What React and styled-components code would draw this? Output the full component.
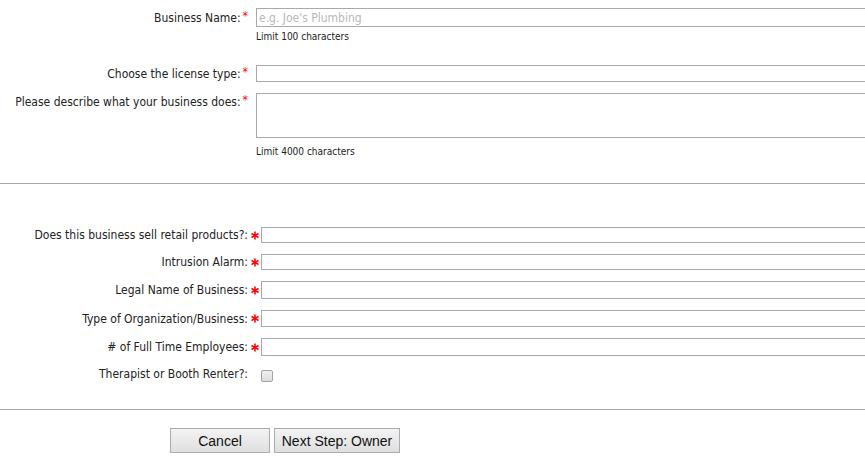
import React from "react";
import styled, { createGlobalStyle } from "styled-components";

const Global = createGlobalStyle`
  html, body { margin: 0; padding: 0; background: #fff; overflow: hidden; }
  body { font-family: "DejaVu Sans Condensed", "DejaVu Sans", Tahoma, sans-serif; font-stretch: semi-condensed; font-size: 12px; color: #222; }
`;

const Page = styled.div`
  width: 865px;
  display: flex;
  flex-direction: column;
`;

const TopSection = styled.div`
  display: grid;
  grid-template-columns: 248px 1fr;
  column-gap: 8px;
  padding-top: 8px;
  padding-bottom: 25px;
`;

const TopLabel = styled.label`
  text-align: right;
  align-self: ${(p) => (p.$top ? "start" : "center")};
  margin-top: ${(p) => p.$mt || 0}px;
  line-height: 14px;
  white-space: nowrap;
`;

const SmallStar = styled.span`
  color: #f00;
  margin-left: 2px;
  position: relative;
  top: -2px;
`;

const FieldCol = styled.div`
  display: flex;
  flex-direction: column;
  margin-top: ${(p) => p.$mt || 0}px;
`;

const TextInput = styled.input`
  box-sizing: border-box;
  width: 680px;
  height: ${(p) => p.$h || 17}px;
  border: 1px solid #a9a9a9;
  padding: 0 2px;
  margin: 0;
  font: inherit;
  font-size: 12px;
  color: #222;
  outline: none;
  background: #fff;
  align-self: start;
  &::placeholder { color: #b8b8b8; }
`;

const TextArea = styled.textarea`
  box-sizing: border-box;
  width: 680px;
  height: 45px;
  margin: 0;
  border: 1px solid #a9a9a9;
  resize: none;
  outline: none;
  display: block;
`;

const Hint = styled.div`
  font-size: 10px;
  line-height: 12px;
  color: #222;
  margin-top: ${(p) => p.$mt}px;
  margin-bottom: ${(p) => p.$mb || 0}px;
`;

const Rule = styled.hr`
  margin: 0;
  border: 0;
  border-top: 1px solid #a8a8a8;
  height: 0;
  width: 100%;
`;

const BottomSection = styled.div`
  display: grid;
  grid-template-columns: 248px 13px 1fr;
  row-gap: 11px;
  padding-top: 43px;
  padding-bottom: 27px;
`;

const Label = styled.label`
  text-align: right;
  align-self: ${(p) => (p.$start ? "start" : "center")};
  line-height: 14px;
  white-space: nowrap;
`;

const StarCell = styled.div`
  display: flex;
  align-items: center;
  justify-content: center;
`;

const Check = styled.input.attrs({ type: "checkbox" })`
  appearance: none;
  margin: 3px 0 0;
  width: 12px;
  height: 12px;
  box-sizing: border-box;
  border: 1px solid #a3a3a3;
  border-radius: 2px;
  background: linear-gradient(#f0f0f0, #dcdcdc);
  align-self: start;
`;

const Buttons = styled.div`
  display: flex;
  gap: 4px;
  padding: 18px 0 0 170px;
`;

const Button = styled.button`
  box-sizing: border-box;
  width: ${(p) => p.$w}px;
  height: 25px;
  border: 1px solid #acacac;
  border-radius: 0;
  background: linear-gradient(#f3f3f3, #dfdfdf);
  font-family: "Liberation Sans", Arial, sans-serif;
  font-size: 14px;
  color: #111;
  padding: 0;
`;

const Star = () => (
  <svg width="8" height="9" viewBox="0 0 8 9">
    <g stroke="#f00" strokeWidth="1.6" strokeLinecap="butt">
      <line x1="4" y1="0.5" x2="4" y2="8.5" />
      <line x1="0.5" y1="2.5" x2="7.5" y2="6.5" />
      <line x1="0.5" y1="6.5" x2="7.5" y2="2.5" />
    </g>
  </svg>
);

const rows = [
  { label: "Does this business sell retail products?:", h: 16 },
  { label: "Intrusion Alarm:", h: 16 },
  { label: "Legal Name of Business:", h: 18 },
  { label: "Type of Organization/Business:", h: 17 },
  { label: "# of Full Time Employees:", h: 18 },
];

export default function App() {
  return (
    <Page>
      <Global />
      <TopSection>
        <TopLabel>
          Business Name:<SmallStar>*</SmallStar>
        </TopLabel>
        <TextInput $h={19} placeholder="e.g. Joe's Plumbing" />
        <div />
        <Hint $mt={4} $mb={22}>Limit 100 characters</Hint>

        <TopLabel>
          Choose the license type:<SmallStar>*</SmallStar>
        </TopLabel>
        <TextInput $h={17} />

        <TopLabel $top $mt={13}>
          Please describe what your business does:<SmallStar>*</SmallStar>
        </TopLabel>
        <FieldCol $mt={11}>
          <TextArea />
          <Hint $mt={8}>Limit 4000 characters</Hint>
        </FieldCol>
      </TopSection>
      <Rule />
      <BottomSection>
        {rows.map((r) => (
          <React.Fragment key={r.label}>
            <Label>{r.label}</Label>
            <StarCell>
              <Star />
            </StarCell>
            <TextInput $h={r.h} />
          </React.Fragment>
        ))}
        <Label $start>Therapist or Booth Renter?:</Label>
        <div />
        <Check />
      </BottomSection>
      <Rule />
      <Buttons>
        <Button $w={100}>Cancel</Button>
        <Button $w={126}>Next Step: Owner</Button>
      </Buttons>
    </Page>
  );
}
